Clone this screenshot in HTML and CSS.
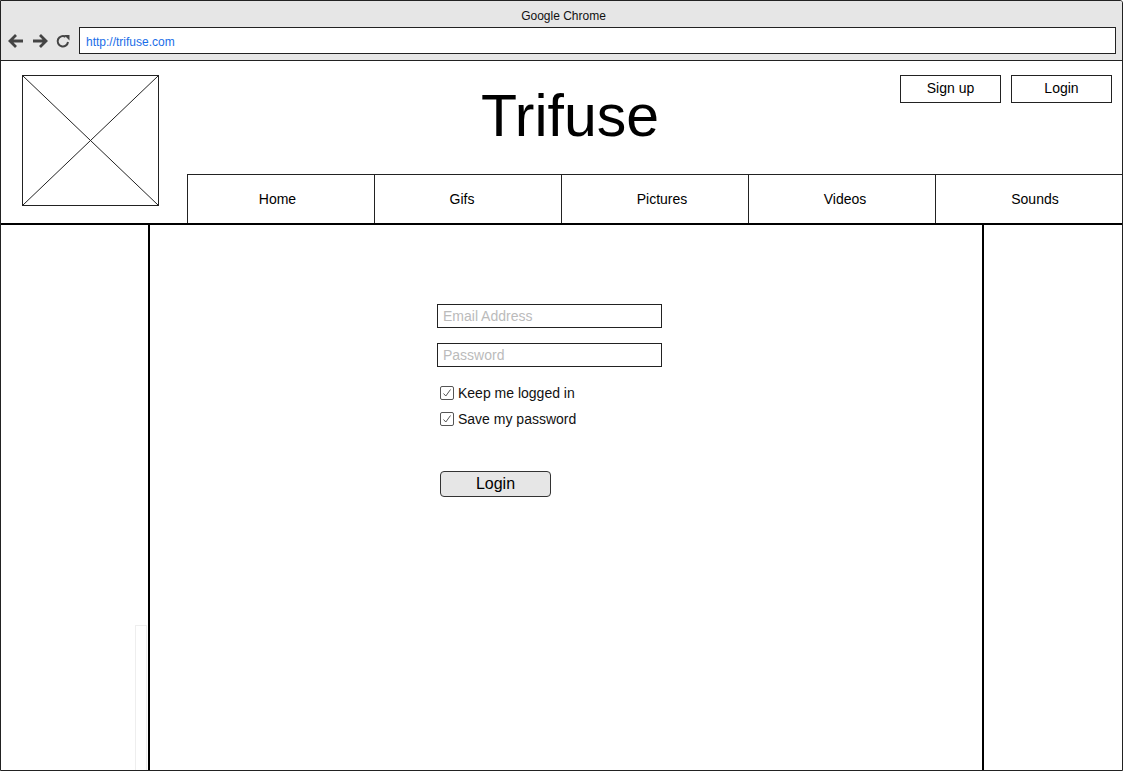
FILE: index.html
```
<!DOCTYPE html>
<html>
<head>
<meta charset="utf-8">
<link rel="stylesheet" href="styles.css">
</head>
<body>
<div class="window">
  <div class="chrome">
    <div class="chrome-title">Google Chrome</div>
    <div class="chrome-row">
      <div class="nav-icons">
        <svg class="ico" width="18" height="18" viewBox="0 0 18 18"><path d="M16 9H3M9 3L3 9l6 6" fill="none" stroke="#444" stroke-width="2.8"/></svg>
        <svg class="ico" width="18" height="18" viewBox="0 0 18 18"><path d="M2 9h13M9 3l6 6-6 6" fill="none" stroke="#444" stroke-width="2.8"/></svg>
        <svg class="ico" width="16" height="16" viewBox="0 0 16 16"><path d="M13 9A5.2 5.2 0 1 1 10.5 3.8" fill="none" stroke="#444" stroke-width="2"/><path d="M9 2h5.5v5.5z" fill="#444"/></svg>
      </div>
      <div class="address">http://trifuse.com</div>
    </div>
  </div>
  <div class="header">
    <div class="logo">
      <svg width="135" height="129" viewBox="0 0 135 129" preserveAspectRatio="none"><path d="M0 0L135 129M135 0L0 129" stroke="#222" stroke-width="1"/></svg>
    </div>
    <div class="header-main">
      <div class="header-top">
        <div class="site-title">Trifuse</div>
        <div class="auth">
          <div class="btn">Sign up</div>
          <div class="btn">Login</div>
        </div>
      </div>
      <div class="menu">
        <div class="menu-item shift-home">Home</div>
        <div class="menu-item shift-gifs">Gifs</div>
        <div class="menu-item shift-pictures">Pictures</div>
        <div class="menu-item shift-videos">Videos</div>
        <div class="menu-item shift-sounds">Sounds</div>
      </div>
    </div>
  </div>
  <div class="body">
    <div class="side-left"><div class="scroll-ghost"></div></div>
    <div class="content">
      <div class="form">
        <div class="field">Email Address</div>
        <div class="field">Password</div>
        <div class="checks">
          <div class="check"><span class="box"><svg width="10" height="10" viewBox="0 0 10 10"><path d="M1.5 5.5l2.3 2.5L8.5 1.5" fill="none" stroke="#555" stroke-width="1"/></svg></span>Keep me logged in</div>
          <div class="check"><span class="box"><svg width="10" height="10" viewBox="0 0 10 10"><path d="M1.5 5.5l2.3 2.5L8.5 1.5" fill="none" stroke="#555" stroke-width="1"/></svg></span>Save my password</div>
        </div>
        <div class="login-btn">Login</div>
      </div>
    </div>
    <div class="side-right"></div>
  </div>
</div>
</body>
</html>
```
FILE: styles.css
```
* { box-sizing: border-box; }
html, body { margin: 0; padding: 0; background: #fff; }
body { font-family: "Liberation Sans", Arial, sans-serif; color: #000; }
.window {
  width: 1123px; height: 771px;
  border: 1px solid #222;
  border-top-right-radius: 3px;
  display: flex; flex-direction: column;
  overflow: hidden;
}
.chrome {
  height: 60px;
  background: #e6e6e6;
  border-bottom: 1px solid #222;
  flex: none;
}
.chrome-title {
  text-align: center;
  font-size: 12px;
  line-height: 14px;
  padding-top: 8px;
  padding-left: 4px;
  color: #111;
}
.chrome-row {
  display: flex;
  align-items: center;
  margin-top: 4px;
}
.nav-icons {
  display: flex; align-items: center;
  width: 78px;
  padding-left: 6px;
  gap: 6px;
}
.ico { display: block; }
.address {
  width: 1037px;
  height: 27px;
  background: #fff;
  border: 1px solid #222;
  color: #1a6ee8;
  font-size: 12px;
  line-height: 25px;
  padding-left: 6px;
  padding-top: 2px;
}
.header {
  display: flex;
  height: 164px;
  border-bottom: 2px solid #000;
  flex: none;
}
.logo {
  width: 186px;
  padding: 14px 0 0 21px;
}
.logo svg {
  display: block;
  width: 137px; height: 131px;
  border: 1px solid #222;
}
.header-main {
  flex: 1;
  display: flex; flex-direction: column;
}
.header-top {
  height: 113px;
  display: flex;
  align-items: flex-start;
}
.site-title {
  font-size: 59px;
  line-height: 66px;
  margin-top: 22px;
  margin-left: 294px;
}
.auth {
  margin-left: auto;
  display: flex;
  gap: 10px;
  padding-top: 14px;
  padding-right: 10px;
}
.btn {
  width: 101px; height: 28px;
  border: 1px solid #222;
  font-size: 14px;
  line-height: 25px;
  text-align: center;
}
.menu {
  flex: 1;
  display: grid;
  grid-template-columns: repeat(5, 1fr);
  border-top: 1px solid #222;
}
.menu-item {
  border-left: 1px solid #222;
  font-size: 14px;
  display: flex; align-items: center; justify-content: center;
}
.shift-home { padding-right: 7px; }
.shift-gifs { padding-right: 12px; }
.shift-pictures { padding-left: 14px; }
.shift-videos { padding-left: 6px; }
.shift-sounds { padding-left: 12px; }
.body {
  flex: 1;
  display: flex;
}
.side-left {
  width: 149px;
  border-right: 2px solid #000;
  display: flex;
  flex-direction: column;
  justify-content: flex-end;
  align-items: flex-end;
}
.scroll-ghost {
  width: 12px; height: 145px;
  border: 1px solid #eee;
  border-bottom: none;
  margin-right: 1px;
}
.content {
  width: 834px;
  border-right: 2px solid #000;
}
.side-right { flex: 1; }
.form {
  margin-left: 287px;
  margin-top: 79px;
  width: 225px;
}
.field {
  height: 24px;
  border: 1px solid #222;
  color: #bbb;
  font-size: 14px;
  line-height: 22px;
  padding-left: 5px;
  margin-bottom: 15px;
}
.checks {
  padding-left: 3px;
  margin-top: -2px;
}
.check {
  display: flex; align-items: center;
  font-size: 14px;
  line-height: 26px;
  height: 26px;
  color: #111;
}
.box {
  width: 14px; height: 14px;
  border: 1px solid #555;
  border-radius: 2px;
  margin-right: 4px;
  display: flex; align-items: center; justify-content: center;
}
.box svg { display: block; }
.login-btn {
  margin-top: 39px;
  margin-left: 3px;
  width: 111px; height: 26px;
  border: 1px solid #333;
  border-radius: 4px;
  background: #e6e6e6;
  font-size: 16px;
  line-height: 24px;
  text-align: center;
}
```
